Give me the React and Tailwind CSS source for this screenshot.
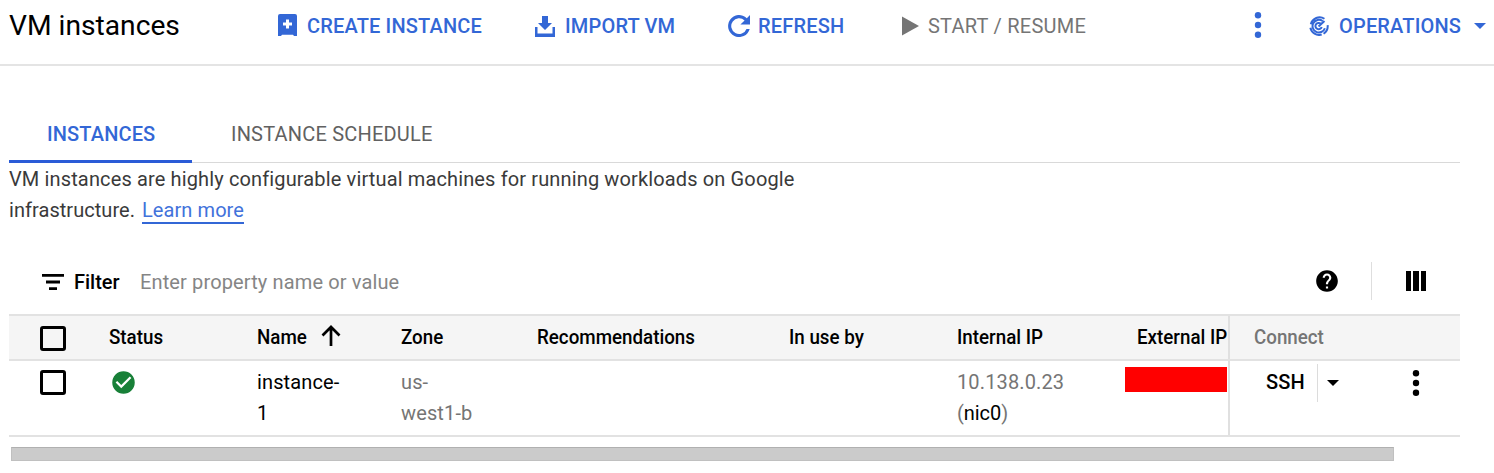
const Svg = ({ children, className, box = "0 0 24 24" }) => (
  <svg viewBox={box} fill="currentColor" className={`shrink-0 ${className}`}>{children}</svg>
);

const Dots = ({ className }) => (
  <Svg box="0 0 8 26" className={className}>
    <circle cx="4" cy="3.3" r="3.2" />
    <circle cx="4" cy="13" r="3.2" />
    <circle cx="4" cy="22.7" r="3.2" />
  </Svg>
);

const Caret = ({ className }) => (
  <Svg box="0 0 12 6" className={className}><path d="M0 0h12L6 6z" /></Svg>
);

const Checkbox = ({ className }) => (
  <div className={`h-[25px] w-[26px] shrink-0 rounded-[3px] border-[3px] border-black ${className}`} />
);

const T = ({ children, className = "" }) => (
  <span className={`block h-[30px] shrink-0 whitespace-nowrap leading-[30px] ${className}`}>{children}</span>
);

function Toolbar() {
  return (
    <header className="flex h-[66px] items-start border-b-2 border-[#e4e4e4] pl-[9px] pt-[11px] font-medium tracking-[0.17px] text-[#3367d6]">
      <h1 className="w-[269px] text-[28.200px] font-normal tracking-normal text-black"><T>VM instances</T></h1>
      <div className="flex h-[30px] w-[257px] items-center">
        <Svg box="0 0 19 22" className="h-[22px] w-[19px] -translate-y-[1px]">
          <path fillRule="evenodd" d="M2 0h15q2 0 2 2v20h-3l-1-1.300H4L3 22H0V2q0-2 2-2zM8 5.500v3H5v3h3v3h3v-3h3v-3h-3v-3z" />
        </Svg>
        <T className="ml-[10px]">CREATE INSTANCE</T>
      </div>
      <div className="flex h-[30px] w-[193px] items-center">
        <Svg box="0 0 20 21" className="h-[21px] w-5">
          <path d="M7 0h6v7h4l-7 7-7-7h4zM0 11h2.500v6.500h15V11H20v10H0z" />
        </Svg>
        <T className="ml-[10px]">IMPORT VM</T>
      </div>
      <div className="flex h-[30px] w-[173px] items-center">
        <Svg box="0 0 22 22" className="size-[22px]">
          <path d="M18.800 3.200A11 11 0 1 0 21.700 14h-3.200A7.900 7.900 0 1 1 16.600 5.400L12.400 9.600H22V0z" />
        </Svg>
        <T className="ml-[8px]">REFRESH</T>
      </div>
      <div className="flex h-[30px] w-[353px] items-center text-[#757575]">
        <Svg box="0 0 18 20" className="ml-px h-[20px] w-[17px]"><path d="M0 0l18 10L0 20z" /></Svg>
        <T className="ml-[9px] font-normal tracking-[0.24px]">START / RESUME</T>
      </div>
      <Dots className="mt-[1px] h-[26px] w-[8px]" />
      <div className="ml-[47px] flex h-[30px] items-center">
        <Svg box="0 0 22 22" className="size-[20px]">
          <g fill="none" stroke="currentColor" strokeWidth="2.200">
            <path d="M17 3A10 10 0 0 0 2 9M1.500 13A10 10 0 0 0 14 20.500M16 19.500A10 10 0 0 0 20.500 10M15 5.500A7 7 0 1 0 17.500 13.500M13 8.500A3.500 3.500 0 1 0 14 12M10.500 11.500L17 5.500" />
          </g>
        </Svg>
        <T className="ml-[10px]">OPERATIONS</T>
        <Caret className="ml-[13px] h-[6px] w-[12px]" />
      </div>
    </header>
  );
}

const HeadCell = ({ children, icon, className }) => (
  <div className={`flex shrink-0 ${className}`}>
    <T className="w-fit origin-left scale-x-[0.938]">{children}</T>
    {icon}
  </div>
);

const SortArrow = () => (
  <Svg box="0 0 20 22" className="ml-[11px] mt-[3px] h-[22px] w-5">
    <path d="M1.500 10.500L10 2l8.500 8.500M10 2v19" fill="none" stroke="currentColor" strokeWidth="2.700" />
  </Svg>
);

export default function App() {
  return (
    <main className="h-[473px] w-[1494px] overflow-hidden bg-white font-['Roboto',sans-serif] text-[20px] tracking-[0.13px] text-[#3a3a3a]">
      <Toolbar />
      <div className="ml-[9px] w-[1451px]">
        <nav className="mt-[41px] flex h-[56px] border-b border-[#d9d9d9]">
          <div className="h-[56px] w-[183px] border-b-[3px] border-[#2a5bd7] pl-[38px] pt-[12px] text-[#3367d6]">
            <T className="font-medium">INSTANCES</T>
          </div>
          <div className="pl-[39px] pt-[12px] text-[#616161]"><T className="tracking-[0.2px]">INSTANCE SCHEDULE</T></div>
        </nav>
        <div className="flex h-[31px] items-center pt-[1px]"><T className="tracking-[0.135px]">VM instances are highly configurable virtual machines for running workloads on Google</T></div>
        <div className="flex h-[31px] items-center">
          <T className="w-[126px] tracking-[0.05px]">infrastructure.</T>
          <a className="ml-[7px] mt-[1px] h-[28px] w-[102px] border-b-2 border-[#3367d6] text-[#4272db]"><T className="-mt-[1px] tracking-[0.08px]">Learn more</T></a>
        </div>
        <div className="mt-[39px] flex h-[50px] items-center pb-[16px] text-black">
          <Svg box="0 0 22 16" className="ml-[33px] mt-[1px] h-[16px] w-[22px]">
            <path d="M0 0h22v2.800H0zM4 6.600h14v2.800H4zM7 13.200h8V16H7z" />
          </Svg>
          <T className="ml-[10px] mt-[2px] w-[46px] font-medium tracking-normal">Filter</T>
          <T className="ml-[20px] mt-[2px] w-[260px] text-[#858585]">Enter property name or value</T>
          <Svg className="ml-[914px] size-[26px]">
            <path d="M12 2C6.480 2 2 6.480 2 12s4.480 10 10 10 10-4.480 10-10S17.520 2 12 2zm1 17h-2v-2h2v2zm2.070-7.750l-.9.920C13.450 12.900 13 13.500 13 15h-2v-.5c0-1.100.45-2.100 1.170-2.830l1.240-1.260c.37-.36.59-.86.59-1.410 0-1.100-.9-2-2-2s-2 .9-2 2H8c0-2.210 1.790-4 4-4s4 1.790 4 4c0 .88-.36 1.680-.93 2.250z" />
          </Svg>
          <div className="ml-[31px] h-[38px] w-px bg-[#dedede]" />
          <Svg box="0 0 20 20" className="ml-[34px] size-[20px]"><path d="M0 0h5v20H0zM7 0h6v20H7zM15 0h5v20h-5z" /></Svg>
        </div>
        <section className="text-black">
          <div className="flex h-[47px] border-y-2 border-[#e2e2e2] bg-[#f5f5f5] pt-[6px] font-medium tracking-normal">
            <div className="w-[100px] shrink-0"><Checkbox className="ml-[31px] mt-[4px]" /></div>
            <HeadCell className="w-[148px]">Status</HeadCell>
            <HeadCell className="w-[144px]" icon={<SortArrow />}>Name</HeadCell>
            <HeadCell className="w-[136px]">Zone</HeadCell>
            <HeadCell className="w-[252px]">Recommendations</HeadCell>
            <HeadCell className="w-[168px]">In use by</HeadCell>
            <HeadCell className="w-[180px]">Internal IP</HeadCell>
            <HeadCell className="w-[91px]">External IP</HeadCell>
            <HeadCell className="-mt-[6px] w-[232px] border-l-2 border-[#e0e0e0] pl-[24px] pt-[6px] text-[#757575]">Connect</HeadCell>
          </div>
          <div className="flex h-[76px] border-b-2 border-[#e2e2e2]">
            <div className="flex w-[248px] pt-[9px]">
              <Checkbox className="ml-[31px]" />
              <Svg className="-mt-[1px] ml-[44px] size-[27px] text-[#188038]">
                <path d="M12 2a10 10 0 1 0 0 20 10 10 0 0 0 0-20zm-2 15l-5-5 1.410-1.410L10 14.170l7.590-7.590L19 8z" />
              </Svg>
            </div>
            <div className="w-[144px] pt-[6px]"><T>instance-</T><T className="mt-[1px]">1</T></div>
            <div className="w-[556px] pt-[6px] text-[#757575]"><T>us-</T><T className="mt-[1px]">west1-b</T></div>
            <div className="w-[168px] pt-[6px] text-[#757575]">
              <T>10.138.0.23</T>
              <T className="mt-[1px] tracking-[-0.050px]">(<span className="text-black">nic0</span>)</T>
            </div>
            <div className="mt-[6px] h-[25px] w-[102px] bg-[#ff0000]" />
            <div className="ml-[1px] flex w-[232px] border-l-2 border-[#e0e0e0] pt-[6px] font-medium">
              <T className="ml-[36px] w-[39px]">SSH</T>
              <div className="-mt-[3px] ml-[12px] h-[38px] w-px bg-[#dcdcdc]" />
              <Caret className="ml-[9px] mt-[13px] h-[6px] w-[12px]" />
              <Dots className="ml-[73px] mt-[3px] h-[26px] w-[8px]" />
            </div>
          </div>
        </section>
        <div className="ml-[2px] mt-[10px] h-[14px] w-[1383px] border border-[#c0c0c0] border-t-[#b0b0b0] bg-[#cbcbcb]" />
      </div>
    </main>
  );
}
